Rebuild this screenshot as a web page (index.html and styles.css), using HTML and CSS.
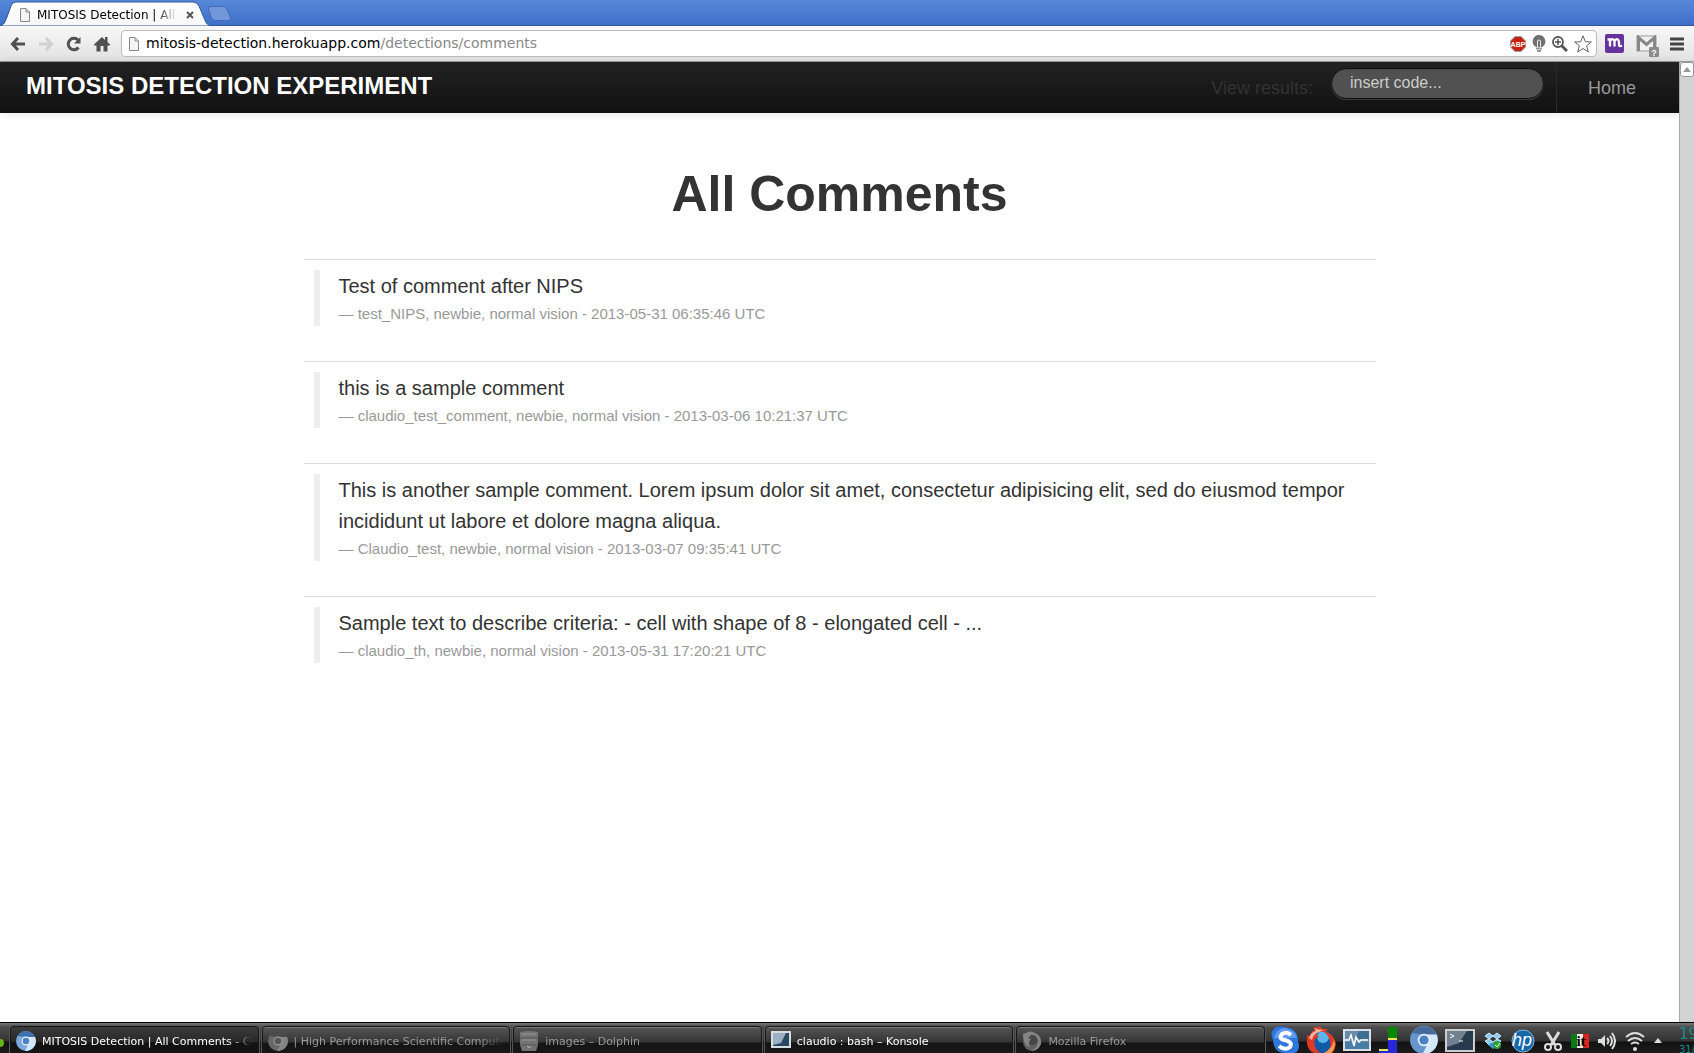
FILE: index.html
```html
<!DOCTYPE html>
<html lang="en">
<head>
<meta charset="utf-8">
<title>MITOSIS Detection | All Comments</title>
<link rel="stylesheet" href="styles.css">
</head>
<body>
<div class="tabstrip">
  <div class="tab">
    <svg class="tab-shape" viewBox="0 0 212 26" preserveAspectRatio="none"><defs><linearGradient id="tg" x2="0" y2="1"><stop offset="0" stop-color="#fff"/><stop offset="1" stop-color="#f7f7f7"/></linearGradient></defs><path d="M0 26C4 25 5 22 7 17L11 6Q12 2 16 2H193Q197 2 199 6L204 18C206 23 207 25 211 26Z" fill="url(#tg)" stroke="#31549c"/></svg>
    <svg class="page-icon" viewBox="0 0 12 16"><path d="M1.500 1.500H7L10.500 5V14.500H1.500ZM7 1.500V5H10.500" fill="#f4f4f4" stroke="#888"/></svg>
    <span class="tab-title">MITOSIS Detection | All Comments</span>
    <button class="tab-close" aria-label="Close tab"><svg width="8" height="8" viewBox="0 0 8 8"><path d="M1 1L7 7M7 1L1 7" stroke="#555" stroke-width="2"/></svg></button>
  </div>
  <button class="new-tab" aria-label="New tab"><svg width="26" height="17" viewBox="0 0 26 17"><path d="M3 1.500H17Q19 1.500 20 4L23.500 13Q24 15.500 22 15.500H8Q5.500 15.500 4.500 13L1.500 4Q1 1.500 3 1.500Z" fill="#7296da" stroke="#4569b5"/></svg></button>
</div>
<div class="toolbar">
  <button class="tool" aria-label="Back"><svg width="16" height="16" viewBox="0 0 16 16"><path d="M8 2L2.500 8L8 14M3 8H15" fill="none" stroke="#505050" stroke-width="3"/></svg></button>
  <button class="tool" aria-label="Forward"><svg width="16" height="16" viewBox="0 0 16 16"><path d="M8 2L13.500 8L8 14M13 8H1" fill="none" stroke="#d0d0d0" stroke-width="3"/></svg></button>
  <button class="tool" aria-label="Reload"><svg width="16" height="16" viewBox="0 0 16 16"><path d="M12.500 11.500A5.700 5.700 0 1 1 12 4" fill="none" stroke="#505050" stroke-width="3"/><path d="M14.500 1V7.500H8Z" fill="#505050"/></svg></button>
  <button class="tool" aria-label="Home"><svg width="16" height="16" viewBox="0 0 16 16"><path d="M8 1L0 8.500V9.500H2.500V15.500H6.500V10H9.500V15.500H13.500V9.500H16V8.500L13.500 6V1H11V4Z" fill="#505050"/></svg></button>
  <div class="omnibox">
    <svg class="page-icon" viewBox="0 0 12 16"><path d="M1.500 1.500H7L10.500 5V14.500H1.500ZM7 1.500V5H10.500" fill="#f4f4f4" stroke="#888"/></svg>
    <span class="url">mitosis-detection.herokuapp.com<span class="path">/detections/comments</span></span>
    <span class="abp"><svg width="16" height="16" viewBox="0 0 16 16"><path d="M5 .5H11L15.500 5V11L11 15.500H5L.5 11V5Z" fill="#c8210f" stroke="#999"/><text x="8" y="11" text-anchor="middle">ABP</text></svg></span>
    <svg width="14" height="17" viewBox="0 0 14 17"><path d="M7 0A6.500 6.500 0 0 0 2.500 11L4 12H10L11.500 11A6.500 6.500 0 0 0 7 0Z" fill="#707070"/><path d="M5.500 12V7Q5 5 7 5T8.500 7V12" fill="none" stroke="#eee"/><path d="M4 13.500H10M5 16H9" stroke="#999" stroke-width="2"/></svg>
    <svg width="16" height="16" viewBox="0 0 16 16"><circle cx="6" cy="6" r="5" fill="#fff" stroke="#555" stroke-width="1.800"/><path d="M3 6H9M6 3V9" stroke="#555" stroke-width="1.500"/><path d="M9.500 9.500L15 15" stroke="#555" stroke-width="3"/></svg>
    <svg width="18" height="18" viewBox="0 0 18 18"><path d="M9 .8L11.300 6.700L17.300 7L12.600 10.800L14.300 17L9 13.500L3.700 17L5.400 10.800L.7 7L6.700 6.700Z" fill="#fff" stroke="#606060" stroke-linejoin="round"/></svg>
  </div>
  <button class="ext-m" aria-label="Mendeley"><svg width="19" height="19" viewBox="0 0 19 19"><rect width="19" height="19" rx="2" fill="#66339c"/><path d="M2.500 5.500H5V12.500M5 7.500Q6 5 7.500 5.200T9.500 7.500V12.500M9.500 7.500Q10.500 5 12 5.200T14 7.500V11Q14 13 17 11.500" fill="none" stroke="#fff" stroke-width="2.300"/></svg></button>
  <button class="ext-mail" aria-label="Mail"><svg width="24" height="23" viewBox="0 0 24 23"><rect x="1" y="1" width="19" height="15" fill="#f1f1f1" stroke="#999"/><path d="M2.500 16V2.500L10.500 9.500L18.500 2.500V16" fill="none" stroke="#888" stroke-width="3"/><rect x="13" y="12" width="10" height="10" rx="1" fill="#8a8a8a"/><text x="18" y="21" text-anchor="middle">?</text></svg></button>
  <button class="menu" aria-label="Menu"><svg width="14" height="14" viewBox="0 0 14 14"><path d="M1 2H13M1 7H13M1 12H13" stroke="#444" stroke-width="3" stroke-linecap="round"/></svg></button>
</div>
<div class="viewport">
  <div class="page">
    <header class="navbar">
      <a class="brand" href="#">MITOSIS DETECTION EXPERIMENT</a>
      <form class="search"><label for="code">View results:</label><input id="code" type="text" placeholder="insert code..."></form>
      <a class="home" href="#">Home</a>
    </header>
    <main class="container">
      <h1>All Comments</h1>
      <ul class="comments">
        <li><blockquote><p>Test of comment after NIPS</p><small>— test_NIPS, newbie, normal vision - 2013-05-31 06:35:46 UTC</small></blockquote></li>
        <li><blockquote><p>this is a sample comment</p><small>— claudio_test_comment, newbie, normal vision - 2013-03-06 10:21:37 UTC</small></blockquote></li>
        <li><blockquote><p>This is another sample comment. Lorem ipsum dolor sit amet, consectetur adipisicing elit, sed do eiusmod tempor incididunt ut labore et dolore magna aliqua.</p><small>— Claudio_test, newbie, normal vision - 2013-03-07 09:35:41 UTC</small></blockquote></li>
        <li><blockquote><p>Sample text to describe criteria: - cell with shape of 8 - elongated cell - ...</p><small>— claudio_th, newbie, normal vision - 2013-05-31 17:20:21 UTC</small></blockquote></li>
      </ul>
    </main>
  </div>
  <div class="scrollbar"><button aria-label="Scroll up"><svg width="8" height="5" viewBox="0 0 8 5"><path d="M0 5L4 0L8 5Z" fill="#999"/></svg></button></div>
</div>
<div class="taskbar">
  <span class="launcher"></span>
  <div class="tasks">
    <button class="task active"><svg width="20" height="20" viewBox="0 0 20 20"><circle cx="10" cy="10" r="10" fill="#79a8dc"/><path d="M1.500 5A10 10 0 0 1 19 6H10Z" fill="#3e70ad"/><path d="M19 6A10 10 0 0 1 9 20L14 10L12 6Z" fill="#d3e7fa"/><circle cx="10" cy="10" r="4.500" fill="#e8f2fd"/><circle cx="10" cy="10" r="3.300" fill="#4d81c6"/></svg><span>MITOSIS Detection | All Comments - Chromium</span></button>
    <button class="task"><svg width="20" height="20" viewBox="0 0 20 20"><circle cx="10" cy="10" r="10" fill="#686868"/><path d="M1.500 5A10 10 0 0 1 19 6H10Z" fill="#4a4a4a"/><path d="M19 6A10 10 0 0 1 9 20L14 10L12 6Z" fill="#858585"/><circle cx="10" cy="10" r="4.500" fill="#999"/><circle cx="10" cy="10" r="3.300" fill="#555"/></svg><span>| High Performance Scientific Computing</span></button>
    <button class="task"><svg width="20" height="20" viewBox="0 0 20 20"><path d="M1 1Q10 -1 19 1V14L17 20H3L1 14Z" fill="#737373"/><path d="M1 7H19M1 14H19" stroke="#555"/><path d="M3 9H17M3 3H17" stroke="#999"/><path d="M8 15Q10 18 12 15" fill="none" stroke="#bbb"/></svg><span>images – Dolphin</span></button>
    <button class="task active"><svg width="20" height="18" viewBox="0 0 20 18"><rect x="1" y="1" width="18" height="15" fill="#2b4661" stroke="#d8dde4" stroke-width="2"/><path d="M2 2H15L10 12L2 14Z" fill="#9dafc2"/></svg><span>claudio : bash – Konsole</span></button>
    <button class="task"><svg width="20" height="20" viewBox="0 0 20 20"><circle cx="10" cy="11" r="9" fill="#606060"/><circle cx="11" cy="9" r="5" fill="#474747"/><path d="M1 3L4 2Q8 -1 13 2Q20 5 19 13Q16 20 9 20Q16 17 16 10Q15 3 9 4L6 7L9 8Q5 12 8 16Q1 15 1 3Z" fill="#858585"/></svg><span>Mozilla Firefox</span></button>
  </div>
  <div class="tray">
    <svg width="30" height="28" viewBox="0 0 30 28"><path d="M3 14Q-1 6 6 1Q11 0 14 1Q28 2 28 15Q31 23 25 27Q20 29 15 27Q4 27 3 14Z" fill="#2e77dd"/><path d="M4 12Q6 3 14 2Q25 3 27 12Z" fill="#629af0"/><path d="M21 9Q17 5 12 8Q8 13 15 14Q23 16 20 21Q15 25 9 20" fill="none" stroke="#fff" stroke-width="4"/></svg>
    <svg width="30" height="28" viewBox="0 0 30 28"><circle cx="15" cy="15" r="12" fill="#1259a8"/><circle cx="17" cy="11" r="6" fill="#58b5ee"/><path d="M1 9L4 10Q5 5 9 4L7 1Q12 2 14 0Q16 4 22 3L20 6Q28 8 30 18Q29 25 24 29H11Q20 28 24 22Q26 12 18 6Q13 5 10 8L13 11L9 13Q7 19 11 24L15 28Q3 28 1 18Z" fill="#df3b24"/><path d="M8 2Q12 4 18 4L11 7Q7 9 6 14L3 12Q5 6 10 5Z" fill="#f7b29e"/><path d="M28 14Q31 24 23 28H14Q25 26 28 14Z" fill="#f59b4a"/></svg>
    <svg width="30" height="28" viewBox="0 0 30 28"><rect x="2" y="4" width="26" height="20" fill="#698ba9" stroke="#d9dfe5" stroke-width="2"/><path d="M3 16H27V23H3Z" fill="#4a7da6"/><path d="M17 5H27V13H14Z" fill="#406e91"/><path d="M3 14H7L9 9L12 20L14 11L17 16L19 14H26" fill="none" stroke="#fff" stroke-width="1.500"/></svg>
    <svg width="25" height="30" viewBox="0 0 25 30"><path d="M10 2H19V14H10Z" fill="#008800"/><path d="M10 14H19V30H10Z" fill="#2828d8"/><path d="M10 14H19M1 25H10" stroke="#e8e85c" stroke-width="2"/><path d="M1 26H10V30H1Z" fill="#2828d8"/></svg>
    <svg width="30" height="28" viewBox="0 0 20 20"><circle cx="10" cy="10" r="10" fill="#6695cd"/><path d="M1.500 5A10 10 0 0 1 19 6H10Z" fill="#456b9b"/><path d="M19 6A10 10 0 0 1 9 20L14 10L12 6Z" fill="#d3e7fa"/><circle cx="10" cy="10" r="4.500" fill="#e8f2fd"/><circle cx="10" cy="10" r="3.300" fill="#4d81c6"/></svg>
    <svg width="30" height="28" viewBox="0 0 30 28"><rect x="1" y="4" width="28" height="21" fill="#263b4d" stroke="#ccc" stroke-width="2"/><path d="M2 5H22L14 17L2 21Z" fill="#71818f"/><path d="M5 8L9 10L5 12M14 15H18" fill="none" stroke="#fff"/></svg>
  </div>
  <div class="tray small">
    <svg width="18" height="18" viewBox="0 0 18 18"><path d="M5 1L9 4L5 7L1 4ZM13 1L17 4L13 7L9 4ZM5 7L9 10L5 13L1 9ZM13 7L17 9L13 13L9 10Z" fill="#8ccbf5" stroke="#c9e9ff"/><path d="M4 13L9 10L14 13L9 17Z" fill="#3d95d4"/><circle cx="13" cy="13" r="4" fill="#2a9f32"/><path d="M11 13L13 15L16 11" fill="none" stroke="#fff"/></svg>
    <svg class="hp" width="24" height="24" viewBox="0 0 24 24"><circle cx="12" cy="12" r="11" fill="#1667aa" stroke="#85b9df"/><text x="11" y="17" text-anchor="middle">hp</text></svg>
    <svg width="18" height="20" viewBox="0 0 18 20"><path d="M3 1L11 14M15 1L7 14" stroke="#ddd" stroke-width="3"/><circle cx="4" cy="16" r="3" fill="none" stroke="#ddd" stroke-width="2"/><circle cx="14" cy="16" r="3" fill="none" stroke="#ddd" stroke-width="2"/></svg>
    <svg class="flag" width="18" height="14" viewBox="0 0 18 14"><path d="M0 0H6V14H0Z" fill="#087a18"/><path d="M6 0H12V14H6Z" fill="#eee"/><path d="M12 0H18V14H12Z" fill="#d8231e"/><text x="10" y="12" text-anchor="middle">it</text></svg>
    <svg width="18" height="18" viewBox="0 0 18 18"><path d="M0 7H3L7 3V15L3 11H0Z" fill="#ddd"/><path d="M9 6Q12 9 9 12M12 4Q16 9 12 14M14 1Q20 9 14 17" fill="none" stroke="#ddd" stroke-width="2"/></svg>
    <svg width="20" height="20" viewBox="0 0 20 20"><path d="M1 6Q10 -2 19 6M3 10Q10 4 17 10M6 13Q10 10 14 13" fill="none" stroke="#ddd" stroke-width="2"/><circle cx="10" cy="18" r="2" fill="#ddd"/></svg>
    <svg width="8" height="6" viewBox="0 0 8 6"><path d="M0 5L4 0L8 5Z" fill="#ddd"/></svg>
  </div>
  <div class="clock"><span>19:</span><small>31/05</small></div>
</div>
</body>
</html>
```
FILE: styles.css
```css
* { box-sizing: border-box; }
body {
  margin: 0;
  height: 100vh;
  display: flex;
  flex-direction: column;
  overflow: hidden;
  font-family: "Liberation Sans", Arial, sans-serif;
  color: #333;
  background: #fff;
}
button { border: 0; padding: 0; background: none; font: inherit; color: inherit; display: flex; align-items: center; }
svg { flex: none; display: block; }

/* browser window */
.tabstrip {
  flex: none;
  height: 26px;
  display: flex;
  background: linear-gradient(#5888d8, #3f6fc8);
  border-bottom: 1px solid #31549c;
  font-family: "DejaVu Sans", sans-serif;
}
.tab { position: relative; width: 212px; height: 26px; display: flex; align-items: center; padding: 4px 9px 0 19px; }
.tab-shape { position: absolute; left: 0; top: 0; width: 212px; height: 26px; }
.page-icon { position: relative; width: 12px; height: 16px; }
.tab-title {
  position: relative;
  width: 140px;
  margin: 0 9px 0 6px;
  overflow: hidden;
  white-space: nowrap;
  font-size: 12px;
  line-height: 16px;
  color: #000;
  mask-image: linear-gradient(90deg, #000 118px, transparent 140px);
}
.tab-close { position: relative; }
.new-tab { margin-left: -5px; height: 26px; }
.toolbar {
  flex: none;
  height: 36px;
  display: flex;
  align-items: center;
  padding: 0 10px;
  background: linear-gradient(#f8f8f8, #e2e2e2);
  border-bottom: 1px solid #999;
  font-family: "DejaVu Sans", sans-serif;
}
.tool { width: 16px; margin-right: 12px; }
.tool:nth-child(4) { margin-right: 11px; }
.omnibox {
  flex: 1;
  height: 27px;
  display: flex;
  align-items: center;
  gap: 6px;
  padding: 0 4px 0 6px;
  background: #fff;
  border: 1px solid #bbb;
  border-radius: 4px;
}
.url { flex: 1; padding-bottom: 1px; font-size: 14px; color: #000; white-space: nowrap; }
.path { color: #888; }
.abp text { font: bold 7px "Liberation Sans", sans-serif; fill: #fff; }
.ext-m { margin-left: 8px; }
.ext-mail { margin: 6px 10px 0 12px; }
.ext-mail text { font: bold 9px "Liberation Sans", sans-serif; fill: #fff; }

/* document */
.viewport { flex: 1; min-height: 0; display: flex; }
.page { flex: 1; }
.navbar {
  height: 51px;
  display: flex;
  padding-left: 26px;
  background: linear-gradient(#222, #111);
  box-shadow: 0 1px 10px rgba(0, 0, 0, .1);
}
.brand { flex: 1; font-size: 24px; line-height: 48px; font-weight: bold; color: #fff; text-decoration: none; }
.search { display: flex; align-items: flex-start; font-size: 18px; }
.search label { line-height: 52px; color: #333; margin-right: 18px; }
.search input {
  width: 213px;
  height: 31px;
  margin: 6px 12px 0 0;
  padding: 0 18px 1px;
  border: 1px solid #111;
  border-radius: 16px;
  background: #515151;
  box-shadow: inset 0 1px 2px rgba(0, 0, 0, .1), 0 1px 0 rgba(255, 255, 255, .15);
  color: #ccc;
  font: 16px "Liberation Sans", Arial, sans-serif;
}
.search input::placeholder { color: #ccc; }
.home { width: 123px; padding-left: 31px; border-left: 1px solid #292929; font-size: 18px; line-height: 52px; color: #999; text-decoration: none; }
.container { max-width: 1072px; margin: 0 auto; }
h1 { margin: 51px 0 35px; font-size: 50px; line-height: 60px; text-align: center; }
.comments { list-style: none; margin: 0; padding: 0; }
.comments li { border-top: 1px solid #ddd; padding: 10px 10px 35px; }
blockquote { margin: 0; padding: 1px 0 0 19px; border-left: 6px solid #eee; }
blockquote p { margin: 0; font-size: 20px; line-height: 31px; }
blockquote small { display: block; font-size: 15px; line-height: 24px; color: #999; }
.scrollbar { width: 15px; background: #d3d3d3; border-left: 1px solid #aaa; }
.scrollbar button { width: 100%; height: 15px; justify-content: center; background: #fff; border: 1px solid #999; border-radius: 3px; }

/* desktop panel */
.taskbar {
  flex: none;
  height: 31px;
  display: flex;
  overflow: hidden;
  border-top: 1px solid #000;
  background: linear-gradient(#777 0, #4c4c4c 4px, #333 18px, #111 19px, #1c1c1c);
  font-family: "DejaVu Sans", sans-serif;
}
.launcher { width: 4px; height: 8px; margin: 16px 6px 0 0; border-radius: 0 4px 4px 0; background: #69b414; }
.tasks { flex: 1; display: flex; gap: 3px; padding-top: 3px; }
.task {
  flex: 1;
  min-width: 0;
  height: 34px;
  align-items: flex-start;
  gap: 6px;
  padding: 4px 5px 0;
  border: 1px solid #171717;
  border-radius: 4px 4px 0 0;
  background: linear-gradient(#555, #353535 15px, #141414 16px, #1b1b1b);
  box-shadow: inset 0 1px #777, 0 0 0 1px #555;
  color: #999;
  font-size: 11px;
}
.task span { flex: 1; overflow: hidden; white-space: nowrap; text-align: left; line-height: 22px; mask-image: linear-gradient(90deg, #000 88%, transparent); }
.active { color: #fff; }
.task:first-child { background: linear-gradient(#3b3b3b, #272727 15px, #111 16px, #181818); box-shadow: 0 0 0 1px #555; }
.tray { display: flex; align-items: center; gap: 6px; padding: 4px 9px 0 5px; }
.tray.small { gap: 9px; padding: 5px 17px 0 0; }
.hp text { font: italic 18px "Liberation Sans", sans-serif; fill: #fff; }
.flag text { font: bold 15px "Liberation Serif", serif; fill: #000; }
.clock { width: 15px; flex: none; overflow: hidden; white-space: nowrap; color: #168b8b; font-size: 15px; line-height: 22px; }
.clock small { display: block; font-size: 10px; line-height: 10px; }
```
